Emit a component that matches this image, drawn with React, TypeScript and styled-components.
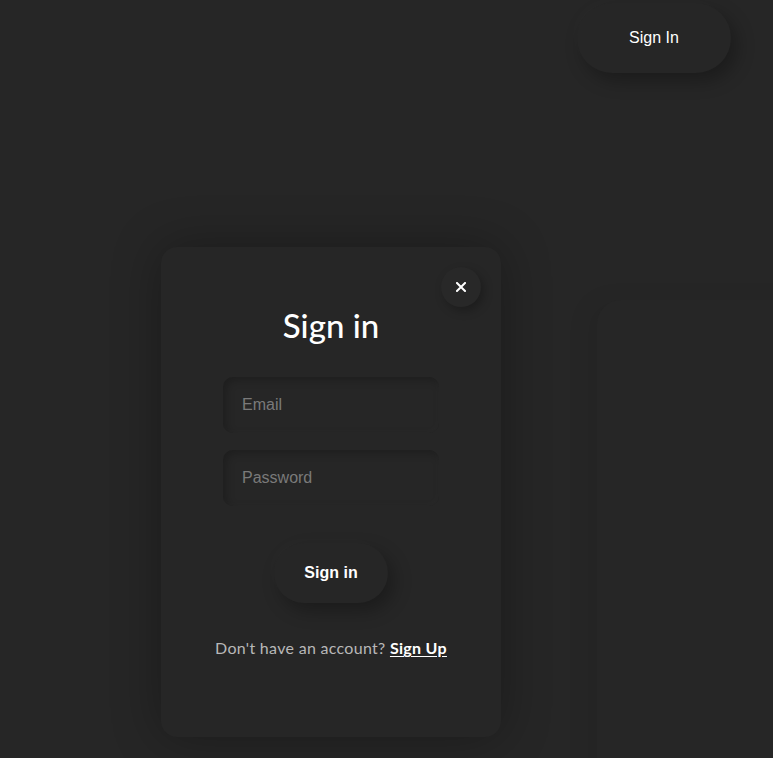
import React from "react";
import styled, { createGlobalStyle } from "styled-components";

const Global = createGlobalStyle`
  html, body { margin: 0; padding: 0; background: #262626; }
  body { font-family: "Liberation Sans", Arial, sans-serif; color: #fff; overflow: hidden; }
  * { box-sizing: border-box; }
`;

const Page = styled.div`
  position: relative;
  width: 773px;
  height: 758px;
  background: #262626;
  overflow: hidden;
`;

const Backdrop = styled.div`
  position: absolute;
  left: 597px;
  top: 300px;
  width: 400px;
  height: 600px;
  border-radius: 24px 0 0 0;
  background: #262626;
  box-shadow: -10px 0 24px rgba(0, 0, 0, 0.05);
`;

const Header = styled.header`
  position: relative;
  display: flex;
  justify-content: flex-end;
  padding: 3px 42px 0 0;
`;

const PillButton = styled.button<{ $w: number; $h: number; $weight?: number }>`
  width: ${(p) => p.$w}px;
  height: ${(p) => p.$h}px;
  border: none;
  border-radius: ${(p) => p.$h / 2}px;
  background: #262626;
  color: #fff;
  font-family: "Liberation Sans", Arial, sans-serif;
  font-size: 16px;
  font-weight: ${(p) => p.$weight ?? 400};
  padding-top: 1px;
  box-shadow: 6px 8px 18px rgba(0, 0, 0, 0.28), -4px -4px 12px rgba(255, 255, 255, 0.015);
  cursor: pointer;
`;

const Main = styled.main`
  position: relative;
  padding: 174px 0 0 161px;
`;

const Card = styled.section`
  position: relative;
  width: 340px;
  height: 490px;
  border-radius: 16px;
  background: #262626;
  box-shadow: 0 0 50px rgba(0, 0, 0, 0.3);
  display: flex;
  flex-direction: column;
  align-items: center;
  padding-top: 58px;
`;

const CloseButton = styled.button`
  position: absolute;
  top: 20px;
  right: 20px;
  width: 40px;
  height: 40px;
  border-radius: 50%;
  border: none;
  background: #282828;
  box-shadow: 3px 4px 10px rgba(0, 0, 0, 0.25);
  display: flex;
  align-items: center;
  justify-content: center;
  padding: 0;
  cursor: pointer;
`;

const Title = styled.h1`
  margin: 0;
  font-family: Lato, "Open Sans", sans-serif;
  font-weight: 500;
  font-size: 33px;
  line-height: 40px;
  color: #fff;
`;

const Form = styled.form`
  display: flex;
  flex-direction: column;
  align-items: center;
  gap: 17px;
  margin-top: 32px;
`;

const Input = styled.input`
  width: 216px;
  height: 56px;
  border-radius: 10px;
  border: none;
  outline: none;
  background: #262626;
  padding: 0 19px;
  font-family: "Liberation Sans", Arial, sans-serif;
  font-size: 16px;
  color: #ddd;
  box-shadow: inset 3px 3px 8px rgba(0, 0, 0, 0.22), inset -2px -2px 6px rgba(255, 255, 255, 0.02);
  &::placeholder { color: #7a7a7a; }
`;

const SubmitRow = styled.div`
  margin-top: 20px;
`;

const Footer = styled.p`
  margin: 35px 0 0;
  font-family: Lato, "Open Sans", sans-serif;
  font-size: 16px;
  color: #b8b8b8;
  letter-spacing: 0.3px;
`;

const SignUpLink = styled.a`
  color: #fff;
  font-weight: 700;
  text-decoration: underline;
  text-underline-offset: 2px;
`;

export default function App() {
  return (
    <>
      <Global />
      <Page>
        <Backdrop />
        <Header>
          <PillButton $w={154} $h={70}>Sign In</PillButton>
        </Header>
        <Main>
          <Card>
            <CloseButton aria-label="Close">
              <svg width="10" height="10" viewBox="0 0 10 10">
                <path d="M1 1 L9 9 M9 1 L1 9" stroke="#fff" strokeWidth="2" strokeLinecap="square" />
              </svg>
            </CloseButton>
            <Title>Sign in</Title>
            <Form onSubmit={(e) => e.preventDefault()}>
              <Input type="email" placeholder="Email" />
              <Input type="password" placeholder="Password" />
              <SubmitRow>
                <PillButton $w={114} $h={60} $weight={700} type="submit">Sign in</PillButton>
              </SubmitRow>
            </Form>
            <Footer>
              Don't have an account? <SignUpLink href="#">Sign Up</SignUpLink>
            </Footer>
          </Card>
        </Main>
      </Page>
    </>
  );
}
